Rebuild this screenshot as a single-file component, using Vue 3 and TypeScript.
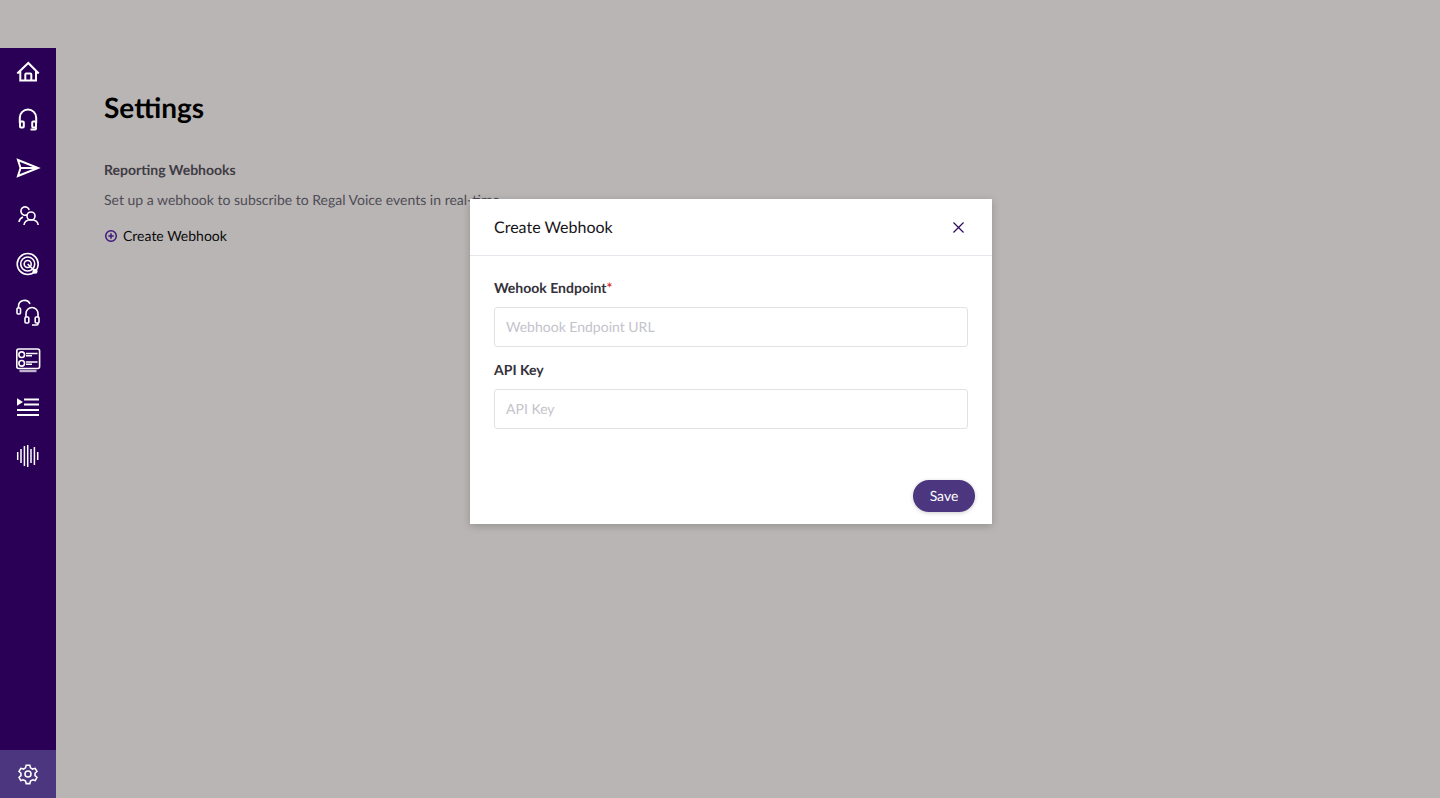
<script setup lang="ts">
const navCount = 9
void navCount
</script>

<template>
  <div class="page">
    <div class="topbar"></div>
    <div class="body">
      <nav class="side">
        <div class="nav-top">
          <div class="nav-item">
            <svg viewBox="0 0 24 24" class="ic"><path d="M1.300 13.500 12.300 3 22.700 13.500M4.300 11v9.500h15.700V11M9.300 20.500v-6a1 1 0 0 1 1-1h4a1 1 0 0 1 1 1v6" /></svg>
          </div>
          <div class="nav-item">
            <svg viewBox="0 0 24 24" class="ic"><path d="M3.800 15V9.700a8.200 8.200 0 0 1 16.400 0V15" /><rect x="4" y="13.500" width="3.800" height="6" rx="1" /><rect x="16.200" y="13.500" width="3.800" height="6" rx="1" /><path d="M20 19.500v1a1 1 0 0 1-1 1h-4.500" /></svg>
          </div>
          <div class="nav-item">
            <svg viewBox="0 0 24 24" class="ic"><path d="M2 4 22 12 2 20 4.500 12ZM4.500 12H22" /></svg>
          </div>
          <div class="nav-item">
            <svg viewBox="0 0 24 24" class="ic mid"><circle cx="15" cy="12" r="4" /><path d="M8 21c.3-3.300 3-5.300 7-5.300s6.900 2 7.200 5.300" /><path d="M11 10.800A4.200 4.200 0 1 1 13.200 6M3 18c.3-2.200 1.800-4 4-5" /></svg>
          </div>
          <div class="nav-item">
            <svg viewBox="0 0 24 24" class="ic mid"><circle cx="11.700" cy="12" r="10.500" /><circle cx="11.700" cy="12" r="7" /><circle cx="11.700" cy="12" r="3.500" /><path d="M11.700 12l7.300 7.300" /><circle cx="19" cy="19.300" r="2.500" class="solid" /></svg>
          </div>
          <div class="nav-item">
            <svg viewBox="0 0 24 24" class="ic mid"><path d="M2.500 8V6.500a6 6 0 0 1 11.500-2.500" /><rect x="1" y="8" width="3.500" height="6" rx="1" /><path d="M10 17v-3.500a6 6 0 0 1 12 0V17" /><rect x="9" y="17" width="3.800" height="6" rx="1" /><rect x="19.200" y="17" width="3.800" height="6" rx="1" /><path d="M22 23v1a1 1 0 0 1-1 1h-5" /></svg>
          </div>
          <div class="nav-item">
            <svg viewBox="0 0 24 24" class="ic mid"><rect x="0.800" y="1" width="22.800" height="19.500" rx="2" /><circle cx="5.700" cy="6.700" r="2.800" /><circle cx="5.700" cy="15.300" r="2.800" /><path d="M10 5.500h11.500M10 7.800h6M10 14h11.500M10 16.300h6" /><path d="M3.500 23h17" class="band" /></svg>
          </div>
          <div class="nav-item">
            <svg viewBox="0 0 24 24" class="ic slim"><path d="M8 3.500h15M8 8.500h15M1 14h22M1 19h22" /><path d="M1 2.300 7 6 1 9.700Z" class="solid" /></svg>
          </div>
          <div class="nav-item">
            <svg viewBox="0 0 24 24" class="ic wave"><path d="M1.700 8v8M5 5v14M8.400 2v20M11.700 1v22M15 5v14M18.400 3v18M21.700 8v8" /></svg>
          </div>
        </div>
        <div class="nav-item active">
          <svg viewBox="0 0 24 24" class="ic gear"><circle cx="12" cy="12" r="3.300" /><path d="M10 2.500h4l.7 2.800 2.300 1.300 2.800-.8 2 3.400-2.100 2 0 2.600 2.100 2-2 3.400-2.800-.8-2.300 1.300-.7 2.800h-4l-.7-2.800-2.300-1.300-2.800.8-2-3.400 2.100-2 0-2.600-2.100-2 2-3.400 2.800.8 2.300-1.300Z" /></svg>
        </div>
      </nav>
      <main class="main">
        <h1 class="title">Settings</h1>
        <h2 class="section">Reporting Webhooks</h2>
        <p class="desc">Set up a webhook to subscribe to Regal Voice events in real-time.</p>
        <div class="create">
          <svg viewBox="0 0 14 14" class="plus"><circle cx="7" cy="7" r="5.300" /><path d="M7 4.300v5.400M4.300 7h5.400" /></svg>
          <span>Create Webhook</span>
        </div>
      </main>
    </div>
    <div class="overlay">
      <section class="modal">
        <header class="modal-head">
          <span class="modal-title">Create Webhook</span>
          <svg viewBox="0 0 12 12" class="close"><path d="M0.500 0.500l11 11M11.500 0.500l-11 11" /></svg>
        </header>
        <div class="modal-body">
          <label class="label">Wehook Endpoint<span class="req">*</span></label>
          <input class="input" type="text" placeholder="Webhook Endpoint URL" />
          <label class="label">API Key</label>
          <input class="input" type="text" placeholder="API Key" />
        </div>
        <footer class="modal-foot">
          <button class="save" type="button">Save</button>
        </footer>
      </section>
    </div>
  </div>
</template>

<style>
html, body { margin: 0; padding: 0; }
</style>

<style scoped>
.page {
  position: relative;
  display: flex;
  flex-direction: column;
  height: 798px;
  overflow: hidden;
  background: #b9b5b4;
  font-family: Lato, "Open Sans", sans-serif;
  text-rendering: geometricPrecision;
}
.topbar { height: 48px; flex: none; }
.body { flex: 1; display: flex; min-height: 0; }
.side {
  width: 56px;
  flex: none;
  background: #290055;
  display: flex;
  flex-direction: column;
  justify-content: space-between;
  position: relative;
  z-index: 2;
}
.nav-item {
  height: 48px;
  display: flex;
  align-items: center;
  justify-content: center;
}
.nav-item.active { background: #4c367f; }
.ic {
  width: 24px;
  height: 24px;
  fill: none;
  stroke: #fff;
  stroke-width: 2;
  overflow: visible;
}
.ic.mid { stroke-width: 1.600; }
.ic.slim { stroke-width: 1.800; }
.ic.wave { stroke-width: 1.500; }
.ic.gear { stroke-width: 1.700; width: 22px; height: 22px; }
.ic .solid { fill: #fff; stroke: none; }
.ic .band { stroke-width: 2.400; opacity: 0.7; }
.main { flex: 1; padding: 39px 48px 0; min-width: 0; }
.title {
  margin: 0 0 34px;
  font-size: 28px;
  line-height: 40px;
  font-weight: 700;
  color: #000;
}
.section {
  margin: 0 0 11px;
  font-size: 14px;
  line-height: 18px;
  font-weight: 700;
  color: #3f3c45;
}
.desc {
  margin: 0 0 15px;
  font-size: 14px;
  line-height: 20px;
  font-weight: 400;
  color: #4e4c54;
}
.create {
  display: flex;
  align-items: center;
  gap: 5px;
  height: 20px;
  font-size: 14px;
  color: #0a0a0a;
}
.plus {
  width: 14px;
  height: 14px;
  margin-top: 1px;
  fill: none;
  stroke: #3c1a78;
  stroke-width: 1.500;
}
.overlay {
  position: absolute;
  top: 199px;
  left: 470px;
  z-index: 3;
}
.modal {
  width: 522px;
  height: 325px;
  background: #fff;
  box-shadow: 0 2px 8px rgba(0, 0, 0, 0.2);
  display: flex;
  flex-direction: column;
  box-sizing: border-box;
}
.modal-head {
  height: 57px;
  flex: none;
  box-sizing: border-box;
  border-bottom: 1px solid #e7e6ec;
  padding: 0 28px 0 24px;
  display: flex;
  align-items: center;
  justify-content: space-between;
}
.modal-title { font-size: 16px; color: #17151c; }
.close {
  width: 11px;
  height: 11px;
  fill: none;
  stroke: #2f0a62;
  stroke-width: 1.300;
  overflow: visible;
}
.modal-body {
  padding: 22px 24px 0;
  display: flex;
  flex-direction: column;
  flex: 1;
}
.label {
  display: block;
  font-size: 14px;
  line-height: 20px;
  font-weight: 700;
  color: #34323a;
  margin-bottom: 9px;
}
.req { color: #d9302f; font-weight: 700; }
.input {
  box-sizing: border-box;
  width: 474px;
  height: 40px;
  border: 1px solid #e2e1e6;
  border-radius: 3px;
  padding: 0 11px 2px;
  margin: 0 0 13px;
  outline: none;
  background: #fff;
  font-family: inherit;
  font-size: 14px;
  text-rendering: geometricPrecision;
}
.input::placeholder { color: #c4c3cb; opacity: 1; }
.modal-foot {
  display: flex;
  justify-content: flex-end;
  padding: 0 17px 12px;
}
.save {
  width: 62px;
  height: 32px;
  border: none;
  border-radius: 16px;
  background: #4c367f;
  color: #fff;
  font-family: inherit;
  font-size: 14px;
  padding: 0 0 2px;
  box-shadow: 0 1px 4px rgba(0, 0, 0, 0.2);
  text-rendering: geometricPrecision;
}
</style>
